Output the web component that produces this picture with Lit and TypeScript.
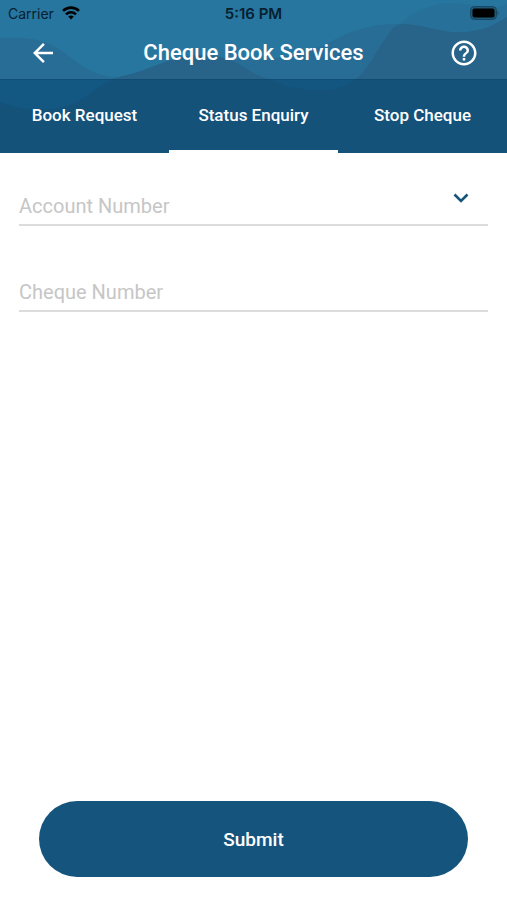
import { LitElement, html, css } from "lit";
import { customElement, state } from "lit/decorators.js";

const TABS = ["Book Request", "Status Enquiry", "Stop Cheque"];

@customElement("app-root")
export class AppRoot extends LitElement {
  @state() private active = 1;

  static styles = css`
    :host {
      display: flex;
      flex-direction: column;
      min-height: 100vh;
      background: #fff;
      font-family: Roboto, sans-serif;
    }
    * { box-sizing: border-box; }
    button, select, input { font: inherit; border: 0; margin: 0; padding: 0; background: none; }
    svg { display: block; }
    .top { position: relative; background: #27769f; color: #fff; }
    .waves { position: absolute; inset: 0; width: 100%; height: 100%; }
    .status, .bar, .tabs { position: relative; }
    .status {
      display: grid;
      grid-template-columns: 1fr auto 1fr;
      align-items: center;
      height: 26px;
      padding: 0 8px;
      color: #06202f;
      font-family: Inter, sans-serif;
      font-size: 14px;
    }
    .carrier { display: flex; align-items: center; gap: 8px; }
    .time { font-size: 15px; font-weight: 600; }
    .battery { justify-self: end; }
    .bar {
      display: grid;
      grid-template-columns: 30px 1fr 30px;
      align-items: center;
      height: 53px;
      padding: 0 28px;
    }
    .icon { display: grid; place-items: center; height: 30px; color: #fff; }
    h1 { margin: 0; text-align: center; font-size: 22px; font-weight: 500; line-height: 28px; }
    .tabs {
      display: grid;
      grid-template-columns: repeat(3, 1fr);
      height: 74px;
      background: rgba(2, 66, 108, 0.52);
      border-top: 1px solid rgba(5, 60, 100, 0.3);
    }
    .tab { color: #fff; font-size: 17px; font-weight: 500; border-bottom: 3px solid transparent; }
    .tab.on { border-bottom-color: #fff; }
    form { flex: 1; display: flex; flex-direction: column; padding: 34px 19px 23px; }
    .field { position: relative; margin-bottom: 47px; }
    .control {
      display: block;
      width: 100%;
      height: 39px;
      border-bottom: 2px solid #dcdcdc;
      border-radius: 0;
      color: #c6c6c6;
      font-size: 20px;
      line-height: 36px;
      appearance: none;
      outline: none;
    }
    .control::placeholder { color: #c6c6c6; opacity: 1; }
    .chevron { position: absolute; right: 18px; top: 5px; pointer-events: none; }
    .submit {
      height: 76px;
      margin: auto 20px 0;
      border-radius: 38px;
      background: #15547d;
      color: #fff;
      font-size: 19px;
      font-weight: 500;
    }
  `;

  render() {
    return html`
      <header class="top">
        <svg class="waves" viewBox="0 0 507 153" preserveAspectRatio="none" aria-hidden="true">
          <path fill="#276d96" d="M0 38C35 36 52 42 70 57C85 69 98 77 118 77C150 74 160 62 195 57C250 62 290 62 330 42C355 28 375 24 400 24C425 24 442 34 465 32C482 31 495 25 507 17V153H0Z"/>
          <path fill="#27769f" fill-opacity=".6" d="M0 80H118C105 84 97 89 80 100C62 112 30 113 0 102Z"/>
          <path fill="#28648a" d="M0 102C30 113 62 112 80 100C97 89 105 81 122 76C150 71 170 54 205 55C240 57 244 72 266 78C295 92 325 93 345 86C370 74 374 50 394 27L400 24C425 24 442 34 465 32C482 31 495 25 507 17V153H0Z"/>
          <path fill="#28658c" fill-opacity=".3" d="M400 24C415 10 430 4 450 3C475 3 490 12 507 4V17C495 25 482 31 465 32C442 34 425 24 400 24Z"/>
        </svg>
        <div class="status">
          <span class="carrier">Carrier
            <svg width="18" height="14" viewBox="0 0 18 14" fill="none" stroke="#000" stroke-width="2.6">
              <path d="M1 4.900C5.500 .5 12.500 .5 17 4.900M4 8.400C7 5.600 11 5.600 14 8.400"/>
              <path d="M6.200 10.600Q9 8.200 11.800 10.600L9 13.500Z" fill="#000" stroke="none"/>
            </svg>
          </span>
          <span class="time">5:16 PM</span>
          <svg class="battery" width="29" height="14" viewBox="0 0 29 14">
            <rect x=".5" y=".5" width="26" height="13" rx="4" fill="#1d5877" stroke="#174761"/>
            <rect x="2.500" y="2.500" width="22" height="9" rx="2" fill="#000"/>
            <path d="M27.500 4.500Q29.500 7 27.500 9.500Z" fill="#174761"/>
          </svg>
        </div>
        <div class="bar">
          <button class="icon" aria-label="Back">
            <svg width="30" height="30" viewBox="0 0 24 24" fill="currentColor"><path d="M20 11H7.830l5.590-5.590L12 4l-8 8 8 8 1.410-1.410L7.830 13H20z"/></svg>
          </button>
          <h1>Cheque Book Services</h1>
          <button class="icon" aria-label="Help">
            <svg width="30" height="30" viewBox="0 0 24 24" fill="currentColor"><path d="M11 18h2v-2h-2v2zm1-16C6.480 2 2 6.480 2 12s4.480 10 10 10 10-4.480 10-10S17.520 2 12 2zm0 18c-4.410 0-8-3.590-8-8s3.590-8 8-8 8 3.590 8 8-3.590 8-8 8zm0-14c-2.210 0-4 1.790-4 4h2c0-1.100.9-2 2-2s2 .9 2 2c0 2-3 1.750-3 5h2c0-2.250 3-2.500 3-5 0-2.210-1.790-4-4-4z"/></svg>
          </button>
        </div>
        <nav class="tabs" role="tablist">
          ${TABS.map((t, i) => html`<button role="tab" aria-selected=${i === this.active}
            class="tab ${i === this.active ? "on" : ""}" @click=${() => (this.active = i)}>${t}</button>`)}
        </nav>
      </header>
      <form @submit=${(e: Event) => e.preventDefault()}>
        <div class="field">
          <select class="control" aria-label="Account Number"><option>Account Number</option></select>
          <svg class="chevron" width="18" height="12" viewBox="0 0 18 12" fill="none" stroke="#15547d" stroke-width="2.600"><path d="M2.500 2.500L9 9L15.500 2.500"/></svg>
        </div>
        <div class="field">
          <input class="control" type="text" aria-label="Cheque Number" placeholder="Cheque Number">
        </div>
        <button class="submit" type="submit">Submit</button>
      </form>
    `;
  }
}
